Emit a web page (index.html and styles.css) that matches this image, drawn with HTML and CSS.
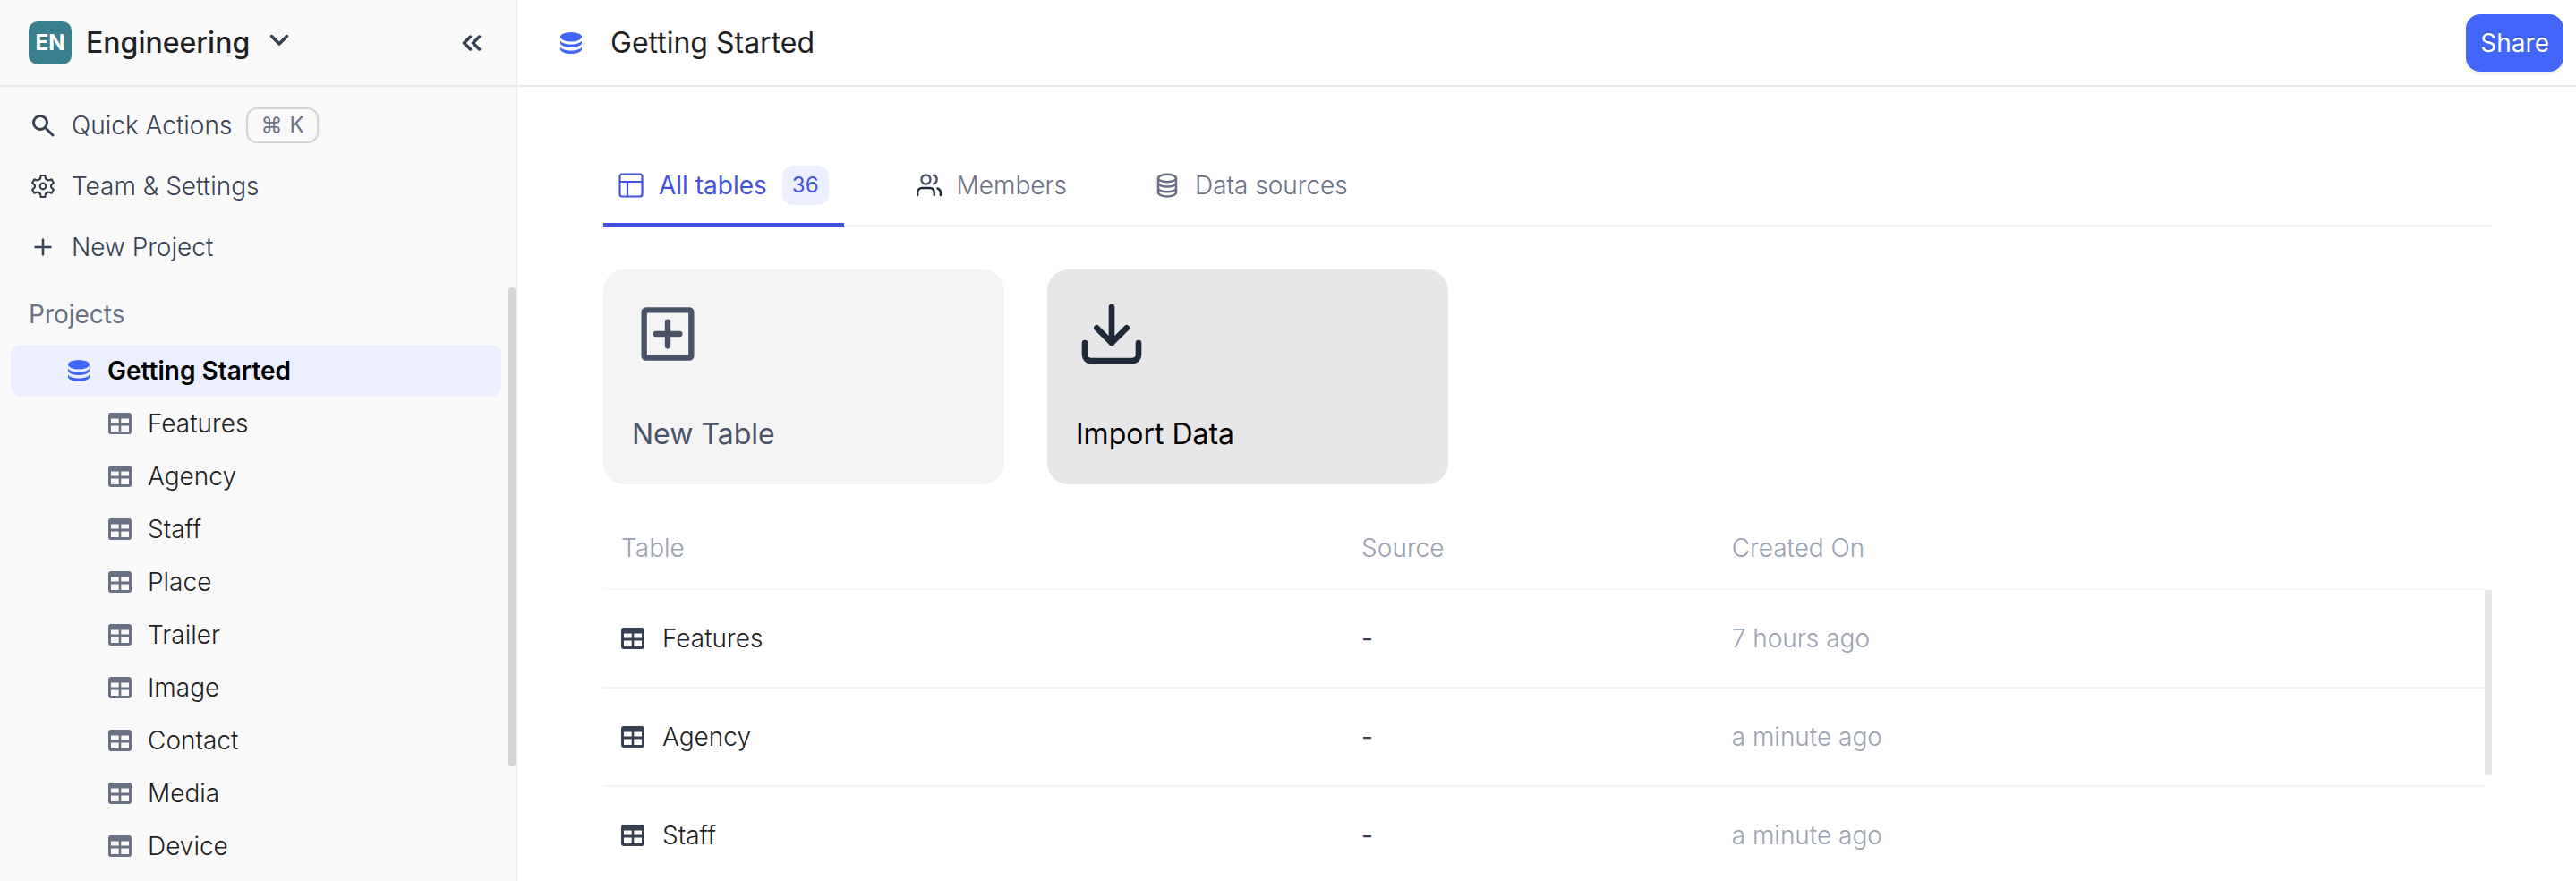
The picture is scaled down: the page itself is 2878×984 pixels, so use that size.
FILE: index.html
```html
<!DOCTYPE html>
<html lang="en">
<head>
<meta charset="utf-8">
<title>Getting Started</title>
<link rel="stylesheet" href="styles.css">
</head>
<body>
<svg class="defs" aria-hidden="true">
  <symbol id="i-db" viewBox="0 0 24 24">
    <g fill="currentColor"><ellipse cx="12" cy="5.2" rx="12" ry="5.2"/>
    <path d="M0 9.4c1.4 2.4 6 4 12 4s10.600-1.600 12-4V12c0 2.800-5.400 5-12 5S0 14.800 0 12z"/>
    <path d="M0 16.400c1.400 2.400 6 4 12 4s10.600-1.600 12-4V19c0 2.800-5.400 5-12 5S0 21.800 0 19z"/></g>
  </symbol>
  <symbol id="i-table" viewBox="0 0 26 24">
    <path fill="currentColor" fill-rule="evenodd" d="M3 0h20a3 3 0 0 1 3 3v18a3 3 0 0 1-3 3H3a3 3 0 0 1-3-3V3a3 3 0 0 1 3-3zM3 6.500v5h8.700v-5zM14.300 6.500v5H23v-5zM3 14.500V21h8.700v-6.500zM14.300 14.500V21H23v-6.500z"/>
  </symbol>
</svg>
<div class="app">
  <aside class="sidebar">
    <div class="workspace">
      <span class="badge">EN</span>
      <button class="workspace-name">Engineering
        <svg width="22" height="14" viewBox="0 0 22 14" fill="none" stroke="currentColor" stroke-width="3.500" stroke-linecap="round" stroke-linejoin="round"><path d="M2.500 2.500 11 11l8.500-8.500"/></svg>
      </button>
      <button class="collapse" aria-label="Collapse sidebar">
        <svg width="22" height="18" viewBox="0 0 22 18" fill="none" stroke="currentColor" stroke-width="3.500" stroke-linecap="round" stroke-linejoin="round"><path d="M9.500 2 2.500 9l7 7M19.500 2l-7 7 7 7"/></svg>
      </button>
    </div>
    <nav class="quick">
      <button class="quick-row">
        <svg class="quick-icon" viewBox="0 0 28 28" fill="none" stroke="currentColor" stroke-width="3" stroke-linecap="round"><circle cx="11" cy="11" r="7.500"/><path d="M16.500 16.500 25 25"/></svg>
        Quick Actions <kbd><span>⌘</span><span>K</span></kbd>
      </button>
      <button class="quick-row">
        <svg class="quick-icon" viewBox="0 0 28 28" fill="none" stroke="currentColor" stroke-width="2.200" stroke-linejoin="round"><path d="M11.800 2h4.400l.9 3.800 2.900 1.700 3.700-1.200 2.200 3.900-2.800 2.600v2.400l2.800 2.600-2.200 3.900-3.700-1.200-2.900 1.700-.9 3.800h-4.400l-.9-3.800L8 20.500l-3.700 1.200-2.200-3.900 2.800-2.600v-2.400l-2.800-2.600 2.200-3.900L8 7.500l2.900-1.700z"/><circle cx="14" cy="14" r="3.300"/></svg>
        Team &amp; Settings
      </button>
      <button class="quick-row">
        <svg class="quick-icon" viewBox="0 0 28 28" fill="none" stroke="currentColor" stroke-width="2.500" stroke-linecap="round"><path d="M14 5.500v17M5.500 14h17"/></svg>
        New Project
      </button>
    </nav>
    <h2 class="section">Projects</h2>
    <a class="project" href="#project"><svg class="db"><use href="#i-db"/></svg>Getting Started</a>
    <ul class="tables">
      <li><a href="#features"><svg class="tbl"><use href="#i-table"/></svg>Features</a></li>
      <li><a href="#agency"><svg class="tbl"><use href="#i-table"/></svg>Agency</a></li>
      <li><a href="#staff"><svg class="tbl"><use href="#i-table"/></svg>Staff</a></li>
      <li><a href="#place"><svg class="tbl"><use href="#i-table"/></svg>Place</a></li>
      <li><a href="#trailer"><svg class="tbl"><use href="#i-table"/></svg>Trailer</a></li>
      <li><a href="#image"><svg class="tbl"><use href="#i-table"/></svg>Image</a></li>
      <li><a href="#contact"><svg class="tbl"><use href="#i-table"/></svg>Contact</a></li>
      <li><a href="#media"><svg class="tbl"><use href="#i-table"/></svg>Media</a></li>
      <li><a href="#device"><svg class="tbl"><use href="#i-table"/></svg>Device</a></li>
    </ul>
    <div class="side-thumb"></div>
  </aside>
  <main class="main">
    <header class="topbar">
      <svg class="db"><use href="#i-db"/></svg>
      <h1>Getting Started</h1>
      <button class="share">Share</button>
    </header>
    <div class="content">
      <div class="tabs" role="tablist">
        <button class="tab active" role="tab" aria-selected="true">
          <svg width="28" height="28" viewBox="0 0 28 28" fill="none" stroke="currentColor" stroke-width="2.200"><rect x="1.500" y="1.500" width="25" height="25" rx="2.500"/><path d="M1.500 10h25M10 10v16.500"/></svg>
          All tables <span class="count">36</span>
        </button>
        <button class="tab" role="tab" aria-selected="false">
          <svg class="members" width="28" height="28" viewBox="0 0 28 28" fill="none" stroke="currentColor" stroke-width="2.400" stroke-linecap="round"><circle class="soft" cx="10.500" cy="7.500" r="5"/><path class="soft" d="M19 2.700c4.800 1.300 4.800 8.300 0 9.600"/><path d="M1.200 25v-3c0-3 2-5 5-5h8.500c3 0 5 2 5 5v3M23.500 17.500c2 .7 3.300 2.500 3.300 4.500v3"/></svg>
          Members
        </button>
        <button class="tab" role="tab" aria-selected="false">
          <svg width="28" height="28" viewBox="0 0 28 28" fill="none" stroke="currentColor" stroke-width="2.500"><ellipse cx="14" cy="6" rx="10" ry="4.200"/><path d="M4 6v16c0 2.400 4.400 4.400 10 4.400S24 24.400 24 22V6M4 11.300c0 2.400 4.400 4.300 10 4.300s10-1.900 10-4.300M4 17c0 2.400 4.400 4.300 10 4.300S24 19.400 24 17"/></svg>
          Data sources
        </button>
      </div>
      <div class="cards">
        <button class="card">
          <svg width="80" height="80" viewBox="0 0 24 24" fill="none" stroke="currentColor" stroke-width="1.900" stroke-linecap="round" stroke-linejoin="round"><rect x="4.100" y="4" width="15.800" height="16" rx=".6"/><path d="M12 8v8M8 12h8"/></svg>
          New Table
        </button>
        <button class="card hovered">
          <svg width="80" height="80" viewBox="0 0 24 24" fill="none" stroke="#1f293a" stroke-width="2" stroke-linecap="round" stroke-linejoin="round"><path d="M21 15v4a2 2 0 0 1-2 2H5a2 2 0 0 1-2-2v-4M7 10l5 5 5-5M12 15V3"/></svg>
          Import Data
        </button>
      </div>
      <div class="list">
        <table>
          <colgroup><col class="c-name"><col class="c-source"><col><col class="c-scroll"></colgroup>
          <thead><tr><th>Table</th><th>Source</th><th colspan="2">Created On</th></tr></thead>
          <tbody>
            <tr><td><div class="name"><svg class="tbl"><use href="#i-table"/></svg>Features</div></td><td class="dash">-</td><td class="when">7 hours ago</td></tr>
            <tr><td><div class="name"><svg class="tbl"><use href="#i-table"/></svg>Agency</div></td><td class="dash">-</td><td class="when">a minute ago</td></tr>
            <tr><td><div class="name"><svg class="tbl"><use href="#i-table"/></svg>Staff</div></td><td class="dash">-</td><td class="when">a minute ago</td></tr>
          </tbody>
        </table>
        <div class="list-thumb"></div>
      </div>
    </div>
  </main>
</div>
</body>
</html>
```
FILE: styles.css
```css
* { box-sizing: border-box; }
body {
  margin: 0;
  overflow: hidden;
  background: #fff;
  color: #1f1f1f;
  font: 300 28px/40px Inter, "Noto Sans", sans-serif;
}
button {
  border: 0;
  padding: 0;
  background: none;
  color: inherit;
  font: inherit;
  cursor: pointer;
}
a { color: inherit; text-decoration: none; }
svg { flex: none; display: block; }
h1, h2, ul { margin: 0; padding: 0; font: inherit; list-style: none; }
.defs { position: absolute; width: 0; height: 0; }
.app { display: flex; height: 100vh; }

.sidebar {
  position: relative;
  flex: none;
  width: 578px;
  border-right: 2px solid #e7e7e9;
  background: #f9f9fa;
}
.workspace {
  display: flex;
  align-items: center;
  height: 97px;
  padding: 0 38px 0 32px;
  border-bottom: 2px solid #e7e7e9;
}
.badge {
  width: 48px;
  margin-right: 16px;
  border-radius: 10px;
  background: #3a7f8e;
  color: #fff;
  font-size: 24px;
  font-weight: 700;
  line-height: 48px;
  text-align: center;
}
.workspace-name {
  display: flex;
  align-items: center;
  gap: 22px;
  font-size: 32px;
  font-weight: 500;
}
.workspace-name svg, .collapse { color: #374151; }
.workspace-name svg { margin-bottom: 6px; }
.collapse { margin-left: auto; }

.quick { padding-top: 9px; color: #374151; }
.quick-row {
  display: flex;
  align-items: center;
  width: 100%;
  height: 68px;
  padding: 0 34px;
}
.quick-icon { width: 28px; height: 28px; margin-right: 18px; }
kbd {
  display: flex;
  gap: 8px;
  margin-left: 16px;
  padding: 0 14px;
  border: 2px solid #d5d5d9;
  border-radius: 12px;
  color: #6a7184;
  font: 400 24px/36px Inter, "DejaVu Sans", sans-serif;
}
.section { padding: 16px 32px 9px; color: #6a7184; font-weight: 400; line-height: 50px; }
.project {
  display: flex;
  align-items: center;
  gap: 20px;
  height: 58px;
  margin: 0 16px 0 12px;
  padding-left: 64px;
  border-radius: 12px;
  background: #ebeffe;
  color: #000;
  font-weight: 600;
}
.db { width: 24px; height: 24px; color: #4166f8; }
.tbl { width: 26px; height: 24px; }
.tables a {
  display: flex;
  align-items: center;
  gap: 18px;
  height: 59px;
  padding-left: 121px;
}
.tables .tbl { color: #6a7184; }
.side-thumb {
  position: absolute;
  top: 321px;
  right: 0;
  width: 8px;
  height: 535px;
  border-radius: 4px;
  background: #d5d5d9;
}

.main { flex: 1; min-width: 0; }
.topbar {
  display: flex;
  align-items: center;
  gap: 32px;
  height: 97px;
  padding: 0 14px 0 48px;
  border-bottom: 2px solid #e7e7e9;
  font-size: 32px;
  font-weight: 400;
}
.share {
  margin-left: auto;
  padding: 12px 16px;
  border-radius: 16px;
  background: #4166f8;
  box-shadow: 0 4px 0 rgba(0, 0, 0, .045);
  color: #fff;
  font-size: 28px;
  text-shadow: 0 -2px 0 rgba(0, 0, 0, .12);
}
.content { padding: 64px 94px 0 96px; }
.tabs { display: flex; gap: 64px; border-bottom: 2px solid #f0f0f0; }
.tab {
  display: flex;
  align-items: center;
  gap: 17px;
  margin-bottom: -2px;
  padding: 24px 17px 20px;
  border-bottom: 4px solid transparent;
  color: #6a7184;
  line-height: 44px;
}
.tab.active { border-color: #4351e0; color: #4351e0; font-weight: 400; }
.members { color: #1f293a; }
.members .soft { stroke: #4a5268; }
.count {
  padding: 0 11px;
  border-radius: 12px;
  background: #ebeffe;
  font-size: 24px;
}

.cards { display: flex; gap: 48px; margin-top: 48px; }
.card {
  display: flex;
  flex-direction: column;
  gap: 48px;
  width: 448px;
  padding: 32px;
  border-radius: 24px;
  background: #f4f4f5;
  color: #4a5268;
  font-size: 32px;
  font-weight: 400;
  line-height: 48px;
  text-align: left;
}
.card.hovered { background: #e7e7e9; color: #000; }

.list { position: relative; margin-top: 26px; }
table { width: 100%; table-layout: fixed; border-spacing: 0; }
.c-name { width: 39.2%; }
.c-source { width: 19.6%; }
.c-scroll { width: 8px; }
th {
  height: 92px;
  padding: 0 20px;
  border-bottom: 2px solid #f9f9fa;
  color: #9aa2b1;
  font-weight: 300;
  text-align: left;
}
td { height: 110px; padding: 0 20px; border-bottom: 2px solid #f4f4f5; }
.name { display: flex; align-items: center; gap: 20px; }
.name .tbl { color: #374151; }
.dash { color: #374151; font-weight: 400; }
.when { color: #9aa2b1; }
.list-thumb {
  position: absolute;
  top: 92px;
  right: 0;
  width: 8px;
  height: 207px;
  background: #e7e7e9;
}
```
